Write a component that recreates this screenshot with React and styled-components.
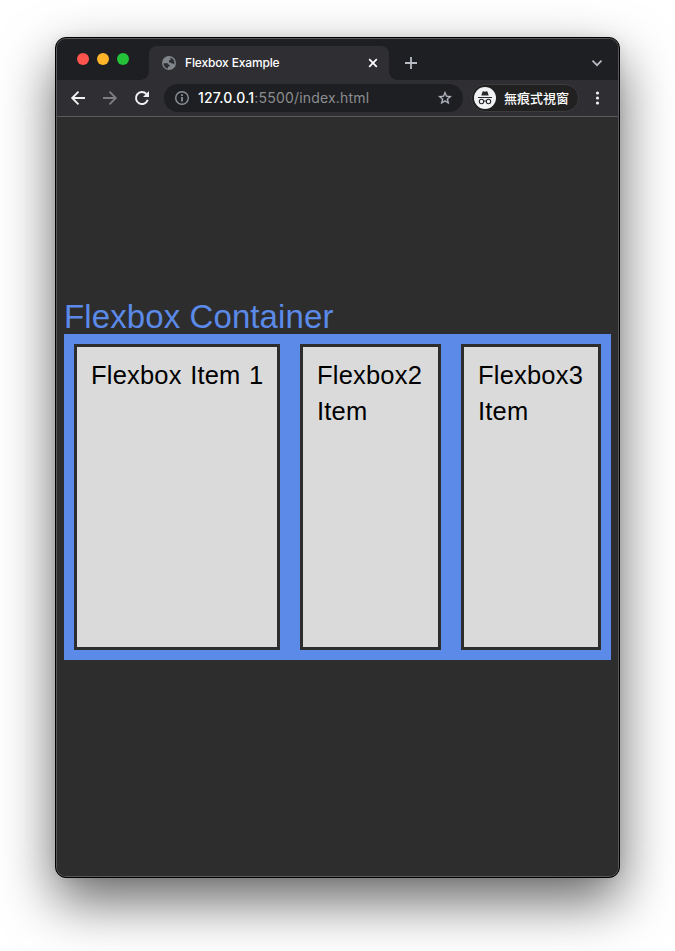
import React from "react";
import styled, { createGlobalStyle } from "styled-components";

const GlobalStyle = createGlobalStyle`
  * { box-sizing: border-box; }
  body { margin: 0; background: #fff; overflow: hidden; }
`;

const Desktop = styled.main`
  width: 675px;
  height: 951px;
  padding: 37px 55px 73px;
  overflow: hidden;
  font-family: Inter, "Noto Sans CJK TC", sans-serif;
`;

const BrowserWindow = styled.section`
  width: 565px;
  height: 841px;
  display: flex;
  flex-direction: column;
  border: 1px solid #000;
  border-radius: 11px;
  overflow: hidden;
  background: #2d2d2d;
  box-shadow: 0 23px 54px rgba(0, 0, 0, 0.6), 0 0 10px rgba(0, 0, 0, 0.08);
`;

const Frame = styled.div`
  flex: 1;
  display: flex;
  flex-direction: column;
  border: 1px solid #59595b;
  border-radius: 10px;
  overflow: hidden;
`;

const TabStrip = styled.header`
  height: 41px;
  flex: none;
  display: flex;
  align-items: flex-end;
  background: #1e1f22;
`;

const TrafficLights = styled.div`
  display: flex;
  gap: 8px;
  width: 84px;
  height: 41px;
  padding: 14px 0 0 20px;
`;

const Light = styled.span`
  width: 12px;
  height: 12px;
  border-radius: 50%;
  background: ${(p) => p.$color};
`;

const Flare = styled.span`
  width: 8px;
  height: 8px;
  flex: none;
  background: radial-gradient(circle at ${(p) => p.$side} top, transparent 7.5px, #2f2e33 8px);
`;

const Tab = styled.div`
  width: 240px;
  height: 34px;
  display: flex;
  align-items: center;
  padding: 0 9px 0 13px;
  border-radius: 8px 8px 0 0;
  background: #2f2e33;
`;

const TabTitle = styled.span`
  flex: 1;
  margin-left: 9px;
  padding-bottom: 2px;
  font-size: 12px;
  font-weight: 500;
  letter-spacing: -0.15px;
  color: #fff;
`;

const NewTab = styled.span`
  display: flex;
  width: 14px;
  height: 24px;
  margin-left: 7px;
`;

const TabMenu = styled.span`
  display: flex;
  height: 23px;
  margin: 0 15px 0 auto;
`;

const Toolbar = styled.nav`
  height: 37px;
  flex: none;
  display: flex;
  align-items: center;
  padding-left: 12px;
  border-bottom: 1px solid #59585d;
  background: #2f2e33;
`;

const NavIcons = styled.div`
  display: flex;
  gap: 14px;
  width: 95px;
`;

const AddressBar = styled.div`
  width: 299px;
  height: 28px;
  display: flex;
  align-items: center;
  padding: 0 10px;
  border-radius: 14px;
  background: #1e1f22;
`;

const Url = styled.span`
  flex: 1;
  margin-left: 8px;
  padding-bottom: 1px;
  font-size: 14px;
  letter-spacing: 0.19px;
  color: #8c8d90;
`;

const Host = styled.span`
  color: #fff;
  font-weight: 500;
`;

const ProfileChip = styled.div`
  width: 108px;
  height: 28px;
  display: flex;
  align-items: center;
  gap: 8px;
  margin-left: 8px;
  padding-left: 2px;
  border: 1px solid #3c3c3d;
  border-radius: 14px;
  background: #212121;
  color: #fff;
  font: 500 13px/20px "Noto Sans CJK TC", sans-serif;
  white-space: nowrap;
`;

const MoreMenu = styled.span`
  display: flex;
  margin-left: 15px;
`;

const Viewport = styled.div`
  flex: 1;
  padding: 182px 7px 0;
  background: #2d2d2d;
  font-family: "Liberation Sans", Arial, sans-serif;
`;

const Heading = styled.h1`
  height: 35px;
  margin: 0;
  font-size: 33px;
  font-weight: 400;
  line-height: 35px;
  letter-spacing: 0.1px;
  white-space: nowrap;
  color: #5b8ae8;
`;

const FlexContainer = styled.div`
  height: 326px;
  display: flex;
  gap: 20px;
  padding: 10px;
  background: #5b8ae8;
`;

const FlexItem = styled.div`
  width: ${(p) => p.$width}px;
  flex: none;
  padding: 10px 0 0 14px;
  border: 3px solid #2d2d2d;
  background: #dadada;
  color: #000;
  font-size: 25.5px;
  line-height: 36px;
  letter-spacing: 0.2px;
  word-spacing: 1.2px;
  white-space: pre-line;
`;

const items = [
  { text: "Flexbox Item 1", width: 206 },
  { text: "Flexbox2\nItem", width: 141 },
  { text: "Flexbox3\nItem", width: 140 },
];

const GlobeIcon = () => (
  <svg width="14" height="14" viewBox="0 0 14 14">
    <circle cx="7" cy="7" r="7" fill="#80868b" />
    <path d="M1.5 7.2h3.3c1.1 0 1.8.7 1.8 1.6 1.2 0 1.4.8 1.2 1.7H6v2c-2.700-.3-4.500-2.500-4.500-5.300zM8.200 1.600c2.300.5 4.200 2.600 4.200 5.100 0 .7-.1 1.200-.3 1.800-.6-.5-.8-1.100-1.700-1.100-.9 0-1.500-.2-1.500-1H7V4.800c0-.7.9-.7 1.700-.7V3c-.3 0-.5-.2-.5-.5z" fill="#2f2e33" />
  </svg>
);

const CloseIcon = () => (
  <svg width="14" height="14" viewBox="0 0 14 14" stroke="#fff" strokeWidth="1.7">
    <path d="m3.200 3.200 7.600 7.600m0-7.600-7.600 7.600" />
  </svg>
);

const PlusIcon = () => (
  <svg width="14" height="14" viewBox="0 0 14 14" stroke="#b9bcc5" strokeWidth="1.8">
    <path d="M7 1v12M1 7h12" />
  </svg>
);

const ChevronIcon = () => (
  <svg width="12" height="12" viewBox="0 0 12 12" fill="none" stroke="#b9bcc5" strokeWidth="1.7">
    <path d="m1.500 3.700 4.500 4.500 4.500-4.500" />
  </svg>
);

const ArrowIcon = ({ color, d }) => (
  <svg width="18" height="18" viewBox="0 0 18 18" fill="none" stroke={color} strokeWidth="1.900">
    <path d={d} />
  </svg>
);

const ReloadIcon = () => (
  <svg width="18" height="18" viewBox="0 0 18 18" fill="none">
    <path d="M13.400 5A6 6 0 1 0 14.700 10.800" stroke="#f1f1f2" strokeWidth="2" />
    <path d="M16 2v6h-6z" fill="#f1f1f2" />
  </svg>
);

const InfoIcon = () => (
  <svg width="16" height="16" viewBox="0 0 16 16">
    <circle cx="8" cy="8" r="6.300" fill="none" stroke="#8c9196" strokeWidth="1.400" />
    <path d="M7.100 7h1.800v4.500H7.100zM7.100 4.300h1.800v1.700H7.100z" fill="#8c9196" />
  </svg>
);

const StarIcon = () => (
  <svg width="16" height="16" viewBox="0 0 24 24" fill="#b9bcc5">
    <path d="m22 9.240-7.190-.62L12 2 9.190 8.630 2 9.240l5.460 4.730L5.820 21 12 17.270 18.180 21l-1.630-7.030L22 9.240zM12 15.400l-3.760 2.270 1-4.280-3.320-2.880 4.380-.38L12 6.100l1.710 4.040 4.380.38-3.320 2.880 1 4.280L12 15.400z" stroke="#b9bcc5" strokeWidth=".4" />
  </svg>
);

const IncognitoIcon = () => (
  <svg width="22" height="22" viewBox="0 0 22 22" fill="none">
    <circle cx="11" cy="11" r="11" fill="#f1f3f4" />
    <path d="M7.300 8.500 8.500 4.700q.2-.6.800-.4l1.700.4 1.700-.4q.6-.2.800.4l1.200 3.800z" fill="#27282b" />
    <path d="M4 10.500h14M9.500 14.300q1.500-.8 3 0" stroke="#27282b" strokeWidth="1" />
    <circle cx="7.500" cy="14.500" r="2.200" stroke="#27282b" strokeWidth="1.100" />
    <circle cx="14.500" cy="14.500" r="2.200" stroke="#27282b" strokeWidth="1.100" />
  </svg>
);

const DotsIcon = () => (
  <svg width="6" height="16" viewBox="0 0 6 16" fill="#f1f1f2">
    <circle cx="3.500" cy="3" r="1.600" />
    <circle cx="3.500" cy="8" r="1.600" />
    <circle cx="3.500" cy="13" r="1.600" />
  </svg>
);

export default function App() {
  return (
    <Desktop>
      <GlobalStyle />
      <BrowserWindow>
        <Frame>
          <TabStrip>
            <TrafficLights>
              <Light $color="#ff544d" />
              <Light $color="#ffb429" />
              <Light $color="#25c138" />
            </TrafficLights>
            <Flare $side="left" />
            <Tab>
              <GlobeIcon />
              <TabTitle>Flexbox Example</TabTitle>
              <CloseIcon />
            </Tab>
            <Flare $side="right" />
            <NewTab><PlusIcon /></NewTab>
            <TabMenu><ChevronIcon /></TabMenu>
          </TabStrip>
          <Toolbar>
            <NavIcons>
              <ArrowIcon color="#f1f1f2" d="M16 9H3.500M9.500 2.700 3.200 9l6.300 6.300" />
              <ArrowIcon color="#7e7e82" d="M2 9h12.500M8.500 2.700 14.800 9l-6.300 6.300" />
              <ReloadIcon />
            </NavIcons>
            <AddressBar>
              <InfoIcon />
              <Url><Host>127.0.0.1</Host>:5500/index.html</Url>
              <StarIcon />
            </AddressBar>
            <ProfileChip>
              <IncognitoIcon />
              無痕式視窗
            </ProfileChip>
            <MoreMenu><DotsIcon /></MoreMenu>
          </Toolbar>
          <Viewport>
            <Heading>Flexbox Container</Heading>
            <FlexContainer>
              {items.map((item) => (
                <FlexItem key={item.text} $width={item.width}>{item.text}</FlexItem>
              ))}
            </FlexContainer>
          </Viewport>
        </Frame>
      </BrowserWindow>
    </Desktop>
  );
}
